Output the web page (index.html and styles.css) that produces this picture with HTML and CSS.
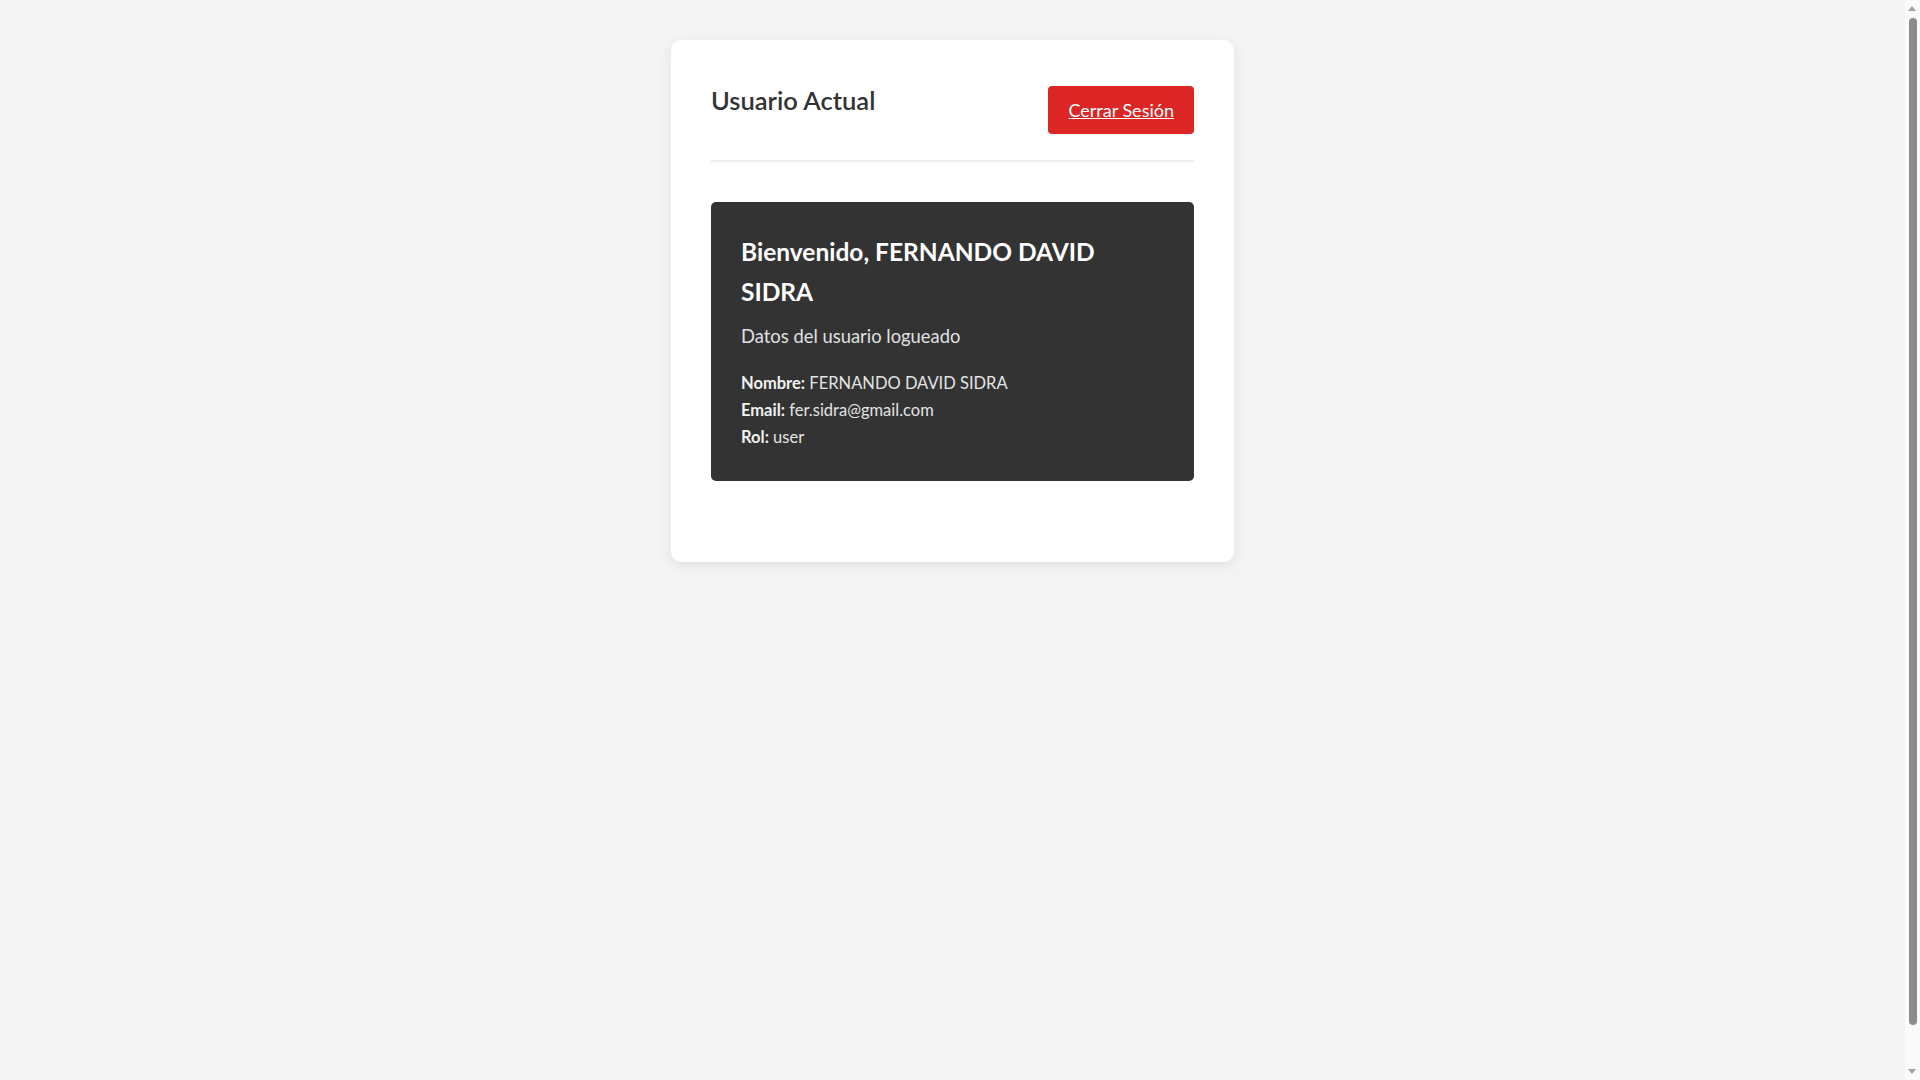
FILE: index.html
```html
<!DOCTYPE html>
<html lang="es">
<head>
    <meta charset="UTF-8">
    <meta name="viewport" content="width=device-width, initial-scale=1.0">
    <title>Usuario Actual</title>
    <link rel="stylesheet" href="styles.css">
</head>
<body>
    <div class="container">
        <div class="header">
            <h2 class="title">Usuario Actual</h2>
            <a href="#" id="logoutBtn" class="btn-logout">Cerrar Sesión</a>
        </div>

        <div id="userInfo" class="user-card">
            <h3 class="welcome">Bienvenido, FERNANDO DAVID SIDRA</h3>
            <p class="user-subtitle">Datos del usuario logueado</p>
            <div class="user-data">
                <p><strong>Nombre:</strong> FERNANDO DAVID SIDRA</p>
                <p><strong>Email:</strong> fer.sidra@gmail.com</p>
                <p><strong>Rol:</strong> user</p>
            </div>
        </div>
    </div>

    <!-- barra de scroll del navegador -->
    <div class="scrollbar" aria-hidden="true">
        <span class="arrow arrow-up"></span>
        <span class="thumb"></span>
        <span class="arrow arrow-down"></span>
    </div>
</body>
</html>
```

FILE: styles.css
```css
* {
    box-sizing: border-box;
}

body {
    margin: 0;
    padding: 20px 35px 20px 20px;
    min-height: 100vh;
    box-sizing: content-box;
    font-family: 'Lato', 'Noto Sans', sans-serif;
    background-color: #f4f4f4;
}

.container {
    max-width: 563px;
    margin: 20px auto;
    padding: 40px;
    background: white;
    border-radius: 10px;
    box-shadow: 0 4px 15px rgba(0, 0, 0, 0.08);
}

.header {
    display: flex;
    justify-content: space-between;
    align-items: center;
    padding-bottom: 20px;
    border-bottom: 2px solid #eee;
    margin-bottom: 40px;
}

.title {
    margin: 0 0 20px 0;
    font-size: 25.5px;
    line-height: 40px;
    font-weight: 600;
    color: #333;
}

.btn-logout {
    display: inline-block;
    padding: 14px 20px;
    background-color: #dc2626;
    color: white;
    font-size: 18px;
    line-height: 20px;
    border-radius: 4px;
    text-decoration: underline;
}

.user-card {
    background-color: #333;
    color: white;
    padding: 30px;
    border-radius: 5px;
    margin-bottom: 41px;
}

.welcome {
    margin: 0 0 12px 0;
    font-size: 24.5px;
    line-height: 40px;
    font-weight: bold;
}

.user-subtitle {
    margin: 0 0 22px 0;
    font-size: 18.4px;
    line-height: 24px;
    color: #e0e0e0;
}

.user-data p {
    margin: 0;
    font-size: 16.5px;
    line-height: 27px;
    color: #e4e4e4;
}

.user-data strong {
    color: #f0f0f0;
}

.scrollbar {
    position: fixed;
    top: 0;
    right: 0;
    width: 15px;
    height: 100vh;
    padding: 18px 0 55px 0;
    display: flex;
    justify-content: center;
    background-color: #fafafa;
}

.thumb {
    width: 8px;
    height: 100%;
    border-radius: 4px;
    background-color: #8c8c8c;
}

.arrow {
    position: absolute;
    left: 3px;
    width: 0;
    height: 0;
    border-left: 4.5px solid transparent;
    border-right: 4.5px solid transparent;
}

.arrow-up {
    top: 6px;
    border-bottom: 5px solid #a3a3a3;
}

.arrow-down {
    bottom: 6px;
    border-top: 5px solid #a3a3a3;
}
```
